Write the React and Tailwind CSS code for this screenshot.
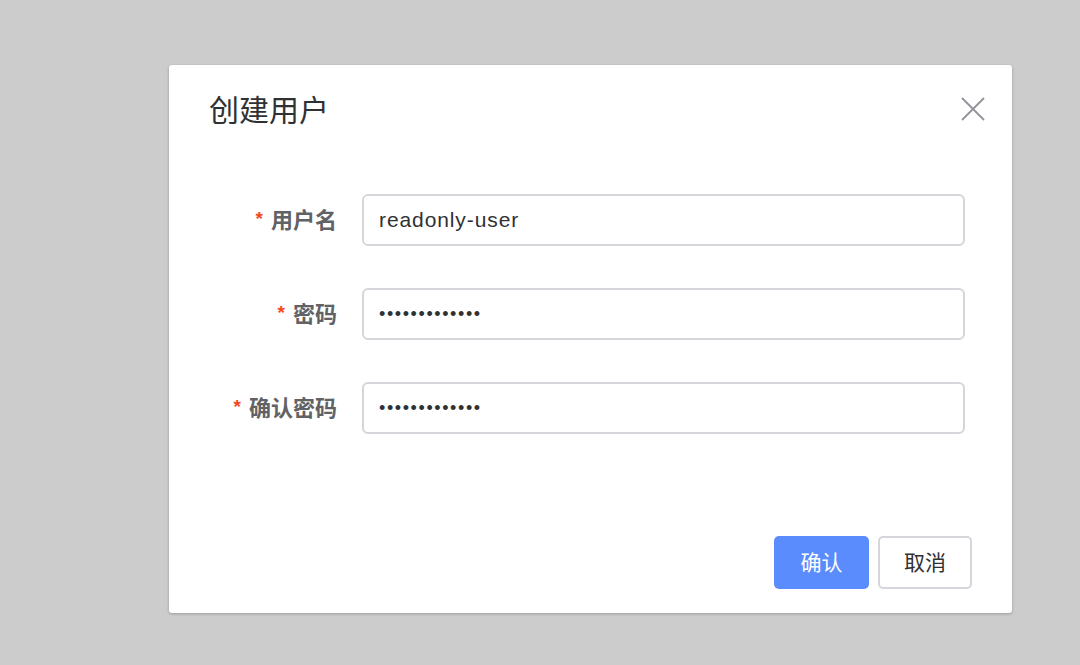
import React from "react";

const font = { fontFamily: '"Liberation Sans", "Noto Sans CJK SC", sans-serif' };

function Row({ label, value, dots }) {
  return (
    <div className="flex items-center">
      <div className="w-[193px] pr-[25px] flex justify-end items-center text-[22px] font-bold text-[#606266]">
        <span className="text-[#f04a1e] text-[19px] mr-[8px] relative top-[-1px]">*</span>
        <span>{label}</span>
      </div>
      <div className="w-[603px] h-[52px] border-2 border-[#d4d6dc] rounded-[6px] flex items-center pl-[15px] text-[21px] tracking-[0.9px] text-[#303133]">
        {dots ? (
          <span className="text-[18px] tracking-[1.6px] text-[#303133]">•••••••••••••</span>
        ) : (
          value
        )}
      </div>
    </div>
  );
}

export default function App() {
  return (
    <div className="w-[1080px] h-[665px] bg-[#cccccc] pl-[169px] pt-[65px] overflow-hidden" style={font}>
      <div className="w-[843px] h-[548px] bg-white rounded-[3px] shadow-[0_1px_3px_rgba(0,0,0,0.25)] flex flex-col">
        <div className="flex justify-between items-start pl-[40px] pr-[26px] pt-[26px]">
          <div className="text-[30px] leading-[40px] text-[#303133]">创建用户</div>
          <svg width="26" height="26" viewBox="0 0 26 26" className="mt-[5px]">
            <path d="M2 2 L24 24 M24 2 L2 24" stroke="#909399" strokeWidth="1.8" fill="none" />
          </svg>
        </div>
        <div className="flex flex-col gap-[42px] mt-[63px]">
          <Row label="用户名" value="readonly-user" />
          <Row label="密码" dots />
          <Row label="确认密码" dots />
        </div>
        <div className="flex justify-end gap-[9px] pr-[40px] mt-auto mb-[24px]">
          <button className="w-[95px] h-[53px] rounded-[5px] bg-[#5b8cfd] text-white text-[21px]">确认</button>
          <button className="w-[94px] h-[53px] rounded-[5px] border-2 border-[#d4d6dc] bg-white text-[#303133] text-[21px]">取消</button>
        </div>
      </div>
    </div>
  );
}
